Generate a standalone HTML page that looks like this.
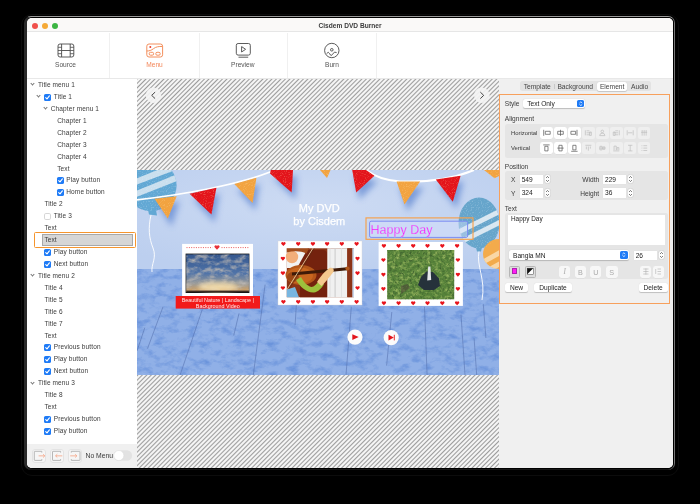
<!DOCTYPE html>
<html><head><meta charset="utf-8">
<style>
*{margin:0;padding:0;box-sizing:border-box}
html,body{width:700px;height:504px;background:#000;overflow:hidden;font-family:"Liberation Sans",sans-serif;color:#333}
.abs{position:absolute}
svg{display:block}
.t{position:absolute;white-space:nowrap}
#win{will-change:transform;position:absolute;left:27px;top:18px;width:646px;height:450px;border-radius:5px;overflow:hidden;background:#fff}
#titlebar{position:absolute;left:0;top:0;width:646px;height:14px;background:#faf9f8;border-bottom:1px solid #e6e6e6}
.tl{position:absolute;top:4.8px;width:6px;height:6px;border-radius:50%}
#title{position:absolute;left:0;top:4px;width:646px;text-align:center;font-size:6.6px;font-weight:bold;color:#3c3c3c}
#toolbar{position:absolute;left:0;top:14px;width:646px;height:47px;background:#fff;border-bottom:1px solid #e8e8e8}
.tdiv{position:absolute;top:1px;width:1px;height:45px;background:#f0f0f0}
.tlabel{position:absolute;top:29px;width:60px;text-align:center;font-size:6.6px;color:#555}
#side{position:absolute;left:0;top:61px;width:110px;height:389px;background:#fff}
.row{position:absolute;height:12px;line-height:12px;font-size:6.5px;color:#3a3a3a;white-space:nowrap;letter-spacing:0.12px}
.chev{position:absolute;width:3px;height:3px;border-right:0.8px solid #777;border-bottom:0.8px solid #777;transform:rotate(45deg)}
.cb{position:absolute;width:7px;height:7px;border-radius:1.6px;background:#1f7bf6}
.cb svg{position:absolute;left:0;top:0}
.cbo{position:absolute;width:7px;height:7px;border-radius:1.8px;background:#fff;border:0.6px solid #d6d6d6}
#sidebot{position:absolute;left:0;top:425px;width:110px;height:25px;background:#f0f0f0}
#center{position:absolute;left:110px;top:61px;width:362px;height:389px;
 background-color:#f5f5f5;
 background-image:repeating-linear-gradient(135deg,#9c9c9c 0px,#f5f5f5 1.05px,#f5f5f5 2.13px,#9c9c9c 3.18px)}
#right{position:absolute;left:472px;top:61px;width:174px;height:389px;background:#f0f0f0}
</style></head><body>
<div class="abs" style="left:21px;top:14px;width:658px;height:462px;border-radius:11px;border:1px solid #0c0c0c"></div>
<div class="abs" style="left:24px;top:16px;width:651px;height:454px;border-radius:7px;background:#161616;border-top:1px solid #9a9a9a;border-right:1px solid #777;border-left:3px solid #2a2a2a"></div>
<div class="abs" style="left:27px;top:17px;width:647px;height:452px;border-radius:6px;background:#000"></div>
<div id="win">
  <div id="titlebar">
    <div class="tl" style="left:4.6px;background:#f0504a"></div>
    <div class="tl" style="left:14.6px;background:#f5a935"></div>
    <div class="tl" style="left:24.6px;background:#3bb542"></div>
    <div id="title">Cisdem DVD Burner</div>
  </div>
  <div id="toolbar">
    <div class="tdiv" style="left:82px"></div>
    <div class="tdiv" style="left:172px"></div>
    <div class="tdiv" style="left:260px"></div>
    <div class="tdiv" style="left:349px"></div>
    <svg class="abs" style="left:0;top:0" width="646" height="46" viewBox="27 32 646 46">
      <g fill="none" stroke="#4a4a4a" stroke-width="0.9">
        <rect x="58" y="44" width="15.8" height="13" rx="2"/>
        <line x1="61.6" y1="44" x2="61.6" y2="57"/>
        <line x1="70.2" y1="44" x2="70.2" y2="57"/>
        <line x1="61.6" y1="50.5" x2="70.2" y2="50.5"/>
      </g>
      <g stroke="#4a4a4a" stroke-width="0.8">
        <line x1="58" y1="47.3" x2="61.6" y2="47.3"/><line x1="58" y1="50.5" x2="61.6" y2="50.5"/><line x1="58" y1="53.7" x2="61.6" y2="53.7"/>
        <line x1="70.2" y1="47.3" x2="73.8" y2="47.3"/><line x1="70.2" y1="50.5" x2="73.8" y2="50.5"/><line x1="70.2" y1="53.7" x2="73.8" y2="53.7"/>
      </g>
      <g fill="none" stroke="#f48f5c" stroke-width="1">
        <rect x="146.8" y="44" width="15.8" height="13" rx="2.2"/>
        <path d="M146.8 51 C149.5 51 151.2 50.4 153.6 48.6 C156 46.8 158.5 46.3 162.6 46.5"/>
        <rect x="149.2" y="52.3" width="4.4" height="2.9" rx="1.3"/>
        <rect x="155.8" y="52.3" width="4.4" height="2.9" rx="1.3"/>
      </g>
      <circle cx="150.3" cy="47.1" r="1" fill="#ea3b2c"/>
      <g fill="none" stroke="#4a4a4a" stroke-width="0.9">
        <rect x="236.3" y="43.5" width="14" height="11.6" rx="1.8"/>
        <line x1="238.5" y1="57.2" x2="248.2" y2="57.2"/>
        <path d="M241.6 46.6 L245.6 49.3 L241.6 52 Z" stroke-linejoin="round"/>
      </g>
      <g fill="none" stroke="#4a4a4a" stroke-width="0.9">
        <circle cx="331.8" cy="50.5" r="7.2"/>
        <circle cx="331.8" cy="49.8" r="1.3"/>
        <path d="M326.6 53.6 Q328.4 51 329.6 53.6 Q331 57 332.6 54.2 Q334.4 50.8 336.6 52.6"/>
      </g>
    </svg>
    <div class="tlabel" style="left:8.5px">Source</div>
    <div class="tlabel" style="left:97.5px;color:#f3875a">Menu</div>
    <div class="tlabel" style="left:185.8px">Preview</div>
    <div class="tlabel" style="left:275px">Burn</div>
  </div>
  <div id="side"></div>
<!--SIDE-->
<div class="row" style="left:11.00px;top:61.00px">Title menu 1</div>
<div class="chev" style="left:3.90px;top:64.40px"></div>
<div class="row" style="left:26.80px;top:72.93px">Title 1</div>
<div class="chev" style="left:10.10px;top:76.33px"></div>
<div class="cb" style="left:17.00px;top:75.63px"><svg width="7" height="7" viewBox="0 0 7 7"><path d="M1.7 3.6 L3 4.9 L5.4 1.9" stroke="#fff" stroke-width="1.1" fill="none" stroke-linecap="round" stroke-linejoin="round"/></svg></div>
<div class="row" style="left:23.80px;top:84.86px">Chapter menu 1</div>
<div class="chev" style="left:17.00px;top:88.26px"></div>
<div class="row" style="left:30.20px;top:96.79px">Chapter 1</div>
<div class="row" style="left:30.20px;top:108.72px">Chapter 2</div>
<div class="row" style="left:30.20px;top:120.65px">Chapter 3</div>
<div class="row" style="left:30.20px;top:132.58px">Chapter 4</div>
<div class="row" style="left:30.20px;top:144.51px">Text</div>
<div class="row" style="left:39.30px;top:156.44px">Play button</div>
<div class="cb" style="left:30.00px;top:159.14px"><svg width="7" height="7" viewBox="0 0 7 7"><path d="M1.7 3.6 L3 4.9 L5.4 1.9" stroke="#fff" stroke-width="1.1" fill="none" stroke-linecap="round" stroke-linejoin="round"/></svg></div>
<div class="row" style="left:39.30px;top:168.37px">Home button</div>
<div class="cb" style="left:30.00px;top:171.07px"><svg width="7" height="7" viewBox="0 0 7 7"><path d="M1.7 3.6 L3 4.9 L5.4 1.9" stroke="#fff" stroke-width="1.1" fill="none" stroke-linecap="round" stroke-linejoin="round"/></svg></div>
<div class="row" style="left:17.40px;top:180.30px">Title 2</div>
<div class="row" style="left:26.70px;top:192.23px">Title 3</div>
<div class="cbo" style="left:17.00px;top:194.93px"></div>
<div class="row" style="left:17.40px;top:204.16px">Text</div>
<div class="abs" style="left:6.90px;top:214.30px;width:101.90px;height:16.10px;border:1.2px solid #f5952e;border-radius:1.5px"></div>
<div class="abs" style="left:15.00px;top:215.80px;width:90.50px;height:12.00px;background:#d6d6d6;border:0.6px solid #a8a8a8"></div>
<div class="row" style="left:17.40px;top:216.09px">Text</div>
<div class="row" style="left:26.70px;top:228.02px">Play button</div>
<div class="cb" style="left:17.00px;top:230.72px"><svg width="7" height="7" viewBox="0 0 7 7"><path d="M1.7 3.6 L3 4.9 L5.4 1.9" stroke="#fff" stroke-width="1.1" fill="none" stroke-linecap="round" stroke-linejoin="round"/></svg></div>
<div class="row" style="left:26.70px;top:239.95px">Next button</div>
<div class="cb" style="left:17.00px;top:242.65px"><svg width="7" height="7" viewBox="0 0 7 7"><path d="M1.7 3.6 L3 4.9 L5.4 1.9" stroke="#fff" stroke-width="1.1" fill="none" stroke-linecap="round" stroke-linejoin="round"/></svg></div>
<div class="row" style="left:11.00px;top:251.88px">Title menu 2</div>
<div class="chev" style="left:3.90px;top:255.28px"></div>
<div class="row" style="left:17.40px;top:263.81px">Title 4</div>
<div class="row" style="left:17.40px;top:275.74px">Title 5</div>
<div class="row" style="left:17.40px;top:287.67px">Title 6</div>
<div class="row" style="left:17.40px;top:299.60px">Title 7</div>
<div class="row" style="left:17.40px;top:311.53px">Text</div>
<div class="row" style="left:26.70px;top:323.46px">Previous button</div>
<div class="cb" style="left:17.00px;top:326.16px"><svg width="7" height="7" viewBox="0 0 7 7"><path d="M1.7 3.6 L3 4.9 L5.4 1.9" stroke="#fff" stroke-width="1.1" fill="none" stroke-linecap="round" stroke-linejoin="round"/></svg></div>
<div class="row" style="left:26.70px;top:335.39px">Play button</div>
<div class="cb" style="left:17.00px;top:338.09px"><svg width="7" height="7" viewBox="0 0 7 7"><path d="M1.7 3.6 L3 4.9 L5.4 1.9" stroke="#fff" stroke-width="1.1" fill="none" stroke-linecap="round" stroke-linejoin="round"/></svg></div>
<div class="row" style="left:26.70px;top:347.32px">Next button</div>
<div class="cb" style="left:17.00px;top:350.02px"><svg width="7" height="7" viewBox="0 0 7 7"><path d="M1.7 3.6 L3 4.9 L5.4 1.9" stroke="#fff" stroke-width="1.1" fill="none" stroke-linecap="round" stroke-linejoin="round"/></svg></div>
<div class="row" style="left:11.00px;top:359.25px">Title menu 3</div>
<div class="chev" style="left:3.90px;top:362.65px"></div>
<div class="row" style="left:17.40px;top:371.18px">Title 8</div>
<div class="row" style="left:17.40px;top:383.11px">Text</div>
<div class="row" style="left:26.70px;top:395.04px">Previous button</div>
<div class="cb" style="left:17.00px;top:397.74px"><svg width="7" height="7" viewBox="0 0 7 7"><path d="M1.7 3.6 L3 4.9 L5.4 1.9" stroke="#fff" stroke-width="1.1" fill="none" stroke-linecap="round" stroke-linejoin="round"/></svg></div>
<div class="row" style="left:26.70px;top:406.97px">Play button</div>
<div class="cb" style="left:17.00px;top:409.67px"><svg width="7" height="7" viewBox="0 0 7 7"><path d="M1.7 3.6 L3 4.9 L5.4 1.9" stroke="#fff" stroke-width="1.1" fill="none" stroke-linecap="round" stroke-linejoin="round"/></svg></div>

<!--/SIDE-->
<!--SIDEBOT-->
<div class="abs" style="left:-27px;top:-18px;width:700px;height:504px">
<div class="abs" style="left:27px;top:443.5px;width:110px;height:24px;background:#f0f0f0"></div>
<div class="abs" style="left:32.3px;top:448.9px;width:14px;height:14px;background:#f6f6f6;border:0.6px solid #e3e3e3;border-radius:3px"></div>
<div class="abs" style="left:50.2px;top:448.9px;width:14px;height:14px;background:#f6f6f6;border:0.6px solid #e3e3e3;border-radius:3px"></div>
<div class="abs" style="left:67.8px;top:448.9px;width:14px;height:14px;background:#f6f6f6;border:0.6px solid #e3e3e3;border-radius:3px"></div>
<svg class="abs" style="left:0;top:0" width="700" height="504">
 <g fill="none" stroke="#ababab" stroke-width="0.85" stroke-linejoin="round">
  <path d="M41.8 451.3 H34.8 Q34.3 451.3 34.3 451.8 V459.9 Q34.3 460.4 34.8 460.4 H41.8 M41.8 451.3 V452.6 M41.8 460.4 V459.1"/>
  <path d="M60.6 451.3 H53 Q52.5 451.3 52.5 451.8 V459.9 Q52.5 460.4 53 460.4 H60.6 M60.6 451.3 V452.6 M60.6 460.4 V459.1"/>
  <path d="M71.3 451.3 H79.5 Q80 451.3 80 451.8 V459.9 Q80 460.4 79.5 460.4 H71.3 M71.3 451.3 V452.6 M71.3 460.4 V459.1"/>
 </g>
 <g fill="none" stroke="#f5a88a" stroke-width="0.85">
  <path d="M38.6 455.85 H44.8 M43.1 454.2 L44.8 455.85 L43.1 457.5"/>
  <path d="M55.6 455.85 H62.3 M57.3 454.2 L55.6 455.85 L57.3 457.5"/>
  <path d="M70.2 455.85 H76.9 M75.2 454.2 L76.9 455.85 L75.2 457.5"/>
 </g>
 <rect x="113.5" y="450.3" width="18.6" height="10.5" rx="5.25" fill="#e2e2e2"/>
 <circle cx="118.8" cy="455.55" r="5" fill="#fff" stroke="#d4d4d4" stroke-width="0.35"/>
</svg>
<div class="t" style="left:85.5px;top:453.1px;font-size:6.8px;line-height:6.8px;color:#3a3a3a">No Menu</div>
</div>
<!--/SIDEBOT-->
  <div id="center"></div>
<!--ARROWS-->
<svg class="abs" style="left:-27px;top:-18px" width="700" height="504">
 <circle cx="153.5" cy="95.3" r="7.8" fill="#f3f3f3" opacity="0.92"/>
 <circle cx="481.8" cy="95.3" r="7.8" fill="#f3f3f3" opacity="0.92"/>
 <path d="M155.1 92.1 L151.7 95.35 L155.1 98.6" stroke="#333" stroke-width="0.9" fill="none"/>
 <path d="M480.3 92.1 L483.7 95.35 L480.3 98.6" stroke="#333" stroke-width="0.9" fill="none"/>
</svg>
<!--/ARROWS-->
<!--CANVAS-->
<svg class="abs" style="left:110px;top:152px" width="362" height="205" viewBox="137 170 362 205">
  <defs>
    <radialGradient id="sky" cx="0.5" cy="0.35" r="0.7">
      <stop offset="0" stop-color="#cddbf3"/>
      <stop offset="1" stop-color="#bccfef"/>
    </radialGradient>
    <filter id="marble" x="0" y="0" width="1" height="1" color-interpolation-filters="sRGB">
      <feTurbulence type="fractalNoise" baseFrequency="0.09 0.15" numOctaves="4" seed="7" result="n"/>
      <feColorMatrix in="n" type="matrix" values="0 0 0 0 0.42  0 0 0 0 0.58  0 0 0 0 0.86  2.6 0 0 0 -1.2" result="c"/>
      <feComposite in="c" in2="SourceGraphic" operator="in"/>
    </filter>
    <filter id="fsh" x="-50%" y="-50%" width="200%" height="200%">
      <feGaussianBlur stdDeviation="3.2"/>
    </filter>
    <filter id="clouds" x="0" y="0" width="1" height="1" color-interpolation-filters="sRGB">
      <feTurbulence type="fractalNoise" baseFrequency="0.13 0.22" numOctaves="3" seed="5" result="n"/>
      <feColorMatrix in="n" type="matrix" values="0 0 0 0 0.74  0 0 0 0 0.72  0 0 0 0 0.70  2.0 0 0 0 -0.8" result="c"/>
      <feComposite in="c" in2="SourceGraphic" operator="in"/>
    </filter>
    <filter id="leaves" x="0" y="0" width="1" height="1" color-interpolation-filters="sRGB">
      <feTurbulence type="fractalNoise" baseFrequency="0.26" numOctaves="3" seed="11" result="n"/>
      <feColorMatrix in="n" type="matrix" values="0 0 0 0 0.58  0 0 0 0 0.70  0 0 0 0 0.36  2.6 0 0 0 -1.1" result="c"/>
      <feComposite in="c" in2="SourceGraphic" operator="in"/>
    </filter>
    <filter id="speck" x="0" y="0" width="1" height="1" color-interpolation-filters="sRGB">
      <feTurbulence type="fractalNoise" baseFrequency="0.9" numOctaves="1" seed="2" result="n"/>
      <feColorMatrix in="n" type="matrix" values="0 0 0 0 1  0 0 0 0 0.9  0 0 0 0 0.7  4 0 0 0 -2.1" result="c"/>
      <feComposite in="c" in2="SourceGraphic" operator="in"/>
    </filter>
    <filter id="speckb" x="0" y="0" width="1" height="1" color-interpolation-filters="sRGB">
      <feTurbulence type="fractalNoise" baseFrequency="0.8" numOctaves="1" seed="9" result="n"/>
      <feColorMatrix in="n" type="matrix" values="0 0 0 0 0.9  0 0 0 0 0.95  0 0 0 0 1  3.5 0 0 0 -1.85" result="c"/>
      <feComposite in="c" in2="SourceGraphic" operator="in"/>
    </filter>
    <filter id="blur05" x="-20%" y="-20%" width="140%" height="140%"><feGaussianBlur stdDeviation="0.6"/></filter>
    <filter id="leavesd" x="0" y="0" width="1" height="1" color-interpolation-filters="sRGB">
      <feTurbulence type="fractalNoise" baseFrequency="0.4" numOctaves="2" seed="21" result="n"/>
      <feColorMatrix in="n" type="matrix" values="0 0 0 0 0.24  0 0 0 0 0.38  0 0 0 0 0.18  3 0 0 0 -1.5" result="c"/>
      <feComposite in="c" in2="SourceGraphic" operator="in"/>
    </filter>
    <filter id="soft" x="-50%" y="-50%" width="200%" height="200%"><feGaussianBlur stdDeviation="2"/></filter>
    <linearGradient id="sunset" x1="0" y1="0" x2="0" y2="1">
      <stop offset="0" stop-color="#35578e"/>
      <stop offset="0.5" stop-color="#4f73a8"/>
      <stop offset="0.78" stop-color="#9a9a98"/>
      <stop offset="1" stop-color="#d9a25a"/>
    </linearGradient>
    <radialGradient id="forest" cx="0.5" cy="0.5" r="0.6">
      <stop offset="0" stop-color="#3a4a3a"/>
      <stop offset="0.3" stop-color="#4f7a36"/>
      <stop offset="1" stop-color="#6ea040"/>
    </radialGradient>
  </defs>
  <rect x="137" y="170" width="362" height="100" fill="url(#sky)"/>
  <!-- floor -->
  <rect x="137" y="269" width="362" height="106" fill="#90b0e7"/>
  <rect x="137" y="269" width="362" height="106" fill="#90b0e7" filter="url(#marble)"/>
  <g stroke="#4f6aa8" stroke-width="0.6" opacity="0.85">
    <line x1="163" y1="306.8" x2="147.5" y2="348.6"/>
    <line x1="144.8" y1="327.7" x2="137" y2="351"/>
    <line x1="202.3" y1="309.4" x2="180.1" y2="375"/>
    <line x1="239" y1="313.4" x2="233.7" y2="335.6"/>
    <line x1="265.1" y1="284.6" x2="253.3" y2="375"/>
    <line x1="296.4" y1="304" x2="295.1" y2="325"/>
    <line x1="351.3" y1="306.8" x2="346" y2="375"/>
    <line x1="391.8" y1="312" x2="386.6" y2="365.6"/>
    <line x1="424.5" y1="306.8" x2="427.1" y2="375"/>
    <line x1="461" y1="314.7" x2="465" y2="375"/>
    <line x1="474.1" y1="338.2" x2="476.7" y2="375"/>
    <line x1="483.3" y1="304.2" x2="485.9" y2="338"/>
  </g>
  <!-- balloons -->
  <clipPath id="bl1"><circle cx="151" cy="185.5" r="25.6"/></clipPath>
  <clipPath id="bl2"><ellipse cx="479" cy="223" rx="20.5" ry="25.5"/></clipPath>
  <clipPath id="bl3"><ellipse cx="499" cy="254" rx="16" ry="15"/></clipPath>
  <g>
    <circle cx="151" cy="185.5" r="25.6" fill="#62a8d4"/>
    <path d="M148 210 L156 210 L157 215.5 L149 214.5 Z" fill="#62a8d4"/>
    <g clip-path="url(#bl1)" fill="#dde9f3" opacity="0.85">
      <path d="M120 185 L175 163 L178 169 L120 191 Z"/>
      <path d="M120 197.5 L180 173 L182 179 L120 203.5 Z"/>
    </g>
    <path d="M151 215 C148 228 149 238 153 248 C157 258 151 264 152 272" stroke="#fff" stroke-width="0.9" fill="none"/>
  </g>
  <g>
    <ellipse cx="479" cy="223" rx="20.5" ry="25.5" fill="#66a5cb"/>
    <path d="M476 247.5 L482 247.5 L481 251.5 L477 251.5 Z" fill="#66a5cb"/>
    <g clip-path="url(#bl2)" fill="#e6eff6" opacity="0.9">
      <path d="M450 233.5 L510 203.5 L510 209 L450 239 Z"/>
      <path d="M450 244.5 L510 214.5 L510 220 L450 250 Z"/>
    </g>
    <ellipse cx="499" cy="254" rx="16" ry="15" fill="#f3ab4c"/>
    <g clip-path="url(#bl3)" fill="#fbe3bd" opacity="0.8">
      <path d="M478 262 L505 247 L506 252 L479 267 Z"/>
      <path d="M480 272 L507 257 L508 262 L481 277 Z"/>
    </g>
    <path d="M479 251.5 C476 265 486 280 482 300" stroke="#fff" stroke-width="0.9" fill="none"/>
  </g>
  <g fill="#fff" filter="url(#speckb)" opacity="0.3"><circle cx="151" cy="185.5" r="25.6"/><ellipse cx="479" cy="223" rx="20.5" ry="25.5"/></g>
  <!-- bunting shadows -->
  <g filter="url(#fsh)" fill="#6288d2" opacity="0.75" transform="translate(1.5 2.5)">
    <path d="M156 202 L178 199 L170 224 Z"/>
    <path d="M192 197 L218 191 L213 220 Z"/>
    <path d="M236 188 L258 181 L254 208 Z"/>
    <path d="M272 176 L295 173 L294 197 Z"/>
    <path d="M353 173 L376 179 L358 197 Z"/>
    <path d="M398 185 L422 185 L406 209 Z"/>
    <path d="M437 183 L462 179 L455 206 Z"/>
  </g>
  <!-- bunting string -->
  <path d="M137 199.8 C180 195 240 185 275 170" stroke="#fff" stroke-width="1.7" fill="none"/>
  <path d="M366 170 C375 177 385 180.5 400 181.5 C430 182.5 455 178 474 170" stroke="#fff" stroke-width="2.1" fill="none"/>
  <!-- flags -->
  <path d="M154.5 198.8 L176.7 196.2 L167.8 218.6 Z" fill="#f2a340"/>
  <path d="M189.6 193.8 L216.4 187.8 L211.4 214.6 Z" fill="#e3141b"/>
  <path d="M234.3 184 L256.4 177.7 L252.6 203 Z" fill="#f2a340"/>
  <path d="M270 173.4 L270.8 170 L293 170 L291.7 192.6 Z" fill="#e3141b"/>
  <path d="M320 170 L330.5 170 L327 178 Z" fill="#f2a340"/>
  <path d="M352.2 170 L366 170 L374.4 175.7 L356.2 192.6 Z" fill="#e3141b"/>
  <path d="M396.6 181.4 L420.1 181.4 L404.5 204.4 Z" fill="#f2a340"/>
  <path d="M435.8 179.6 L460.6 175.7 L452.8 201.8 Z" fill="#e3141b"/>
  <path d="M484 170 L499 170 L499 176 L494.5 178.3 Z" fill="#f2a340"/>
  <g fill="#fff" filter="url(#speck)" opacity="0.28"><path d="M154.5 198.8 L176.7 196.2 L167.8 218.6 Z"/><path d="M189.6 193.8 L216.4 187.8 L211.4 214.6 Z"/><path d="M234.3 184 L256.4 177.7 L252.6 203 Z"/><path d="M270 173.4 L270.8 170 L293 170 L291.7 192.6 Z"/><path d="M320 170 L330.5 170 L327 178 Z"/><path d="M352.2 170 L366 170 L374.4 175.7 L356.2 192.6 Z"/><path d="M396.6 181.4 L420.1 181.4 L404.5 204.4 Z"/><path d="M435.8 179.6 L460.6 175.7 L452.8 201.8 Z"/><path d="M484 170 L499 170 L499 176 L494.5 178.3 Z"/></g>
  <!-- title -->
  <text x="319.3" y="212" text-anchor="middle" font-family="Liberation Sans" font-size="11" fill="#ffffff" stroke="#ffffff" stroke-width="0.25">My DVD</text>
  <text x="319.3" y="225.3" text-anchor="middle" font-family="Liberation Sans" font-size="11" fill="#ffffff" stroke="#ffffff" stroke-width="0.25">by Cisdem</text>
  <!-- thumb 1 -->
  <rect x="182.1" y="243.9" width="70.9" height="52.1" fill="#fff"/>
  <line x1="186.5" y1="247.6" x2="212.5" y2="247.6" stroke="#e85a5a" stroke-width="1" stroke-dasharray="1 1.35"/>
  <line x1="221.5" y1="247.6" x2="249" y2="247.6" stroke="#e85a5a" stroke-width="1" stroke-dasharray="1 1.35"/>
  <path d="M217 249.8 L214.6 247.3 A1.2 1.2 0 0 1 217 245.9 A1.2 1.2 0 0 1 219.4 247.3 Z" fill="#e8323a"/>
  <rect x="185.6" y="253.6" width="63.8" height="39.4" fill="#151515"/>
  <rect x="186.3" y="254.4" width="62.6" height="37.6" fill="url(#sunset)"/>
  <rect x="186.3" y="254.4" width="62.6" height="37.6" fill="#fff" filter="url(#clouds)"/>
  <ellipse cx="218" cy="287" rx="20" ry="5" fill="#ffe6b0" opacity="0.75" filter="url(#soft)"/>
  <rect x="186.3" y="290.6" width="62.6" height="1.4" fill="#3a2a20"/>
  <rect x="175.7" y="296" width="84.3" height="12.6" fill="#f21a1a"/>
  <text x="217.8" y="301.5" text-anchor="middle" font-family="Liberation Sans" font-size="5.4" fill="#ffe8e8">Beautiful Nature | Landscape |</text>
  <text x="217.8" y="307.7" text-anchor="middle" font-family="Liberation Sans" font-size="5.4" fill="#ffe8e8">Background Video</text>
  <!-- thumb 2 -->
  <rect x="278" y="241" width="84" height="64" fill="#fff" stroke="#d8d8d8" stroke-width="0.4"/>
  <rect x="286.8" y="248.3" width="67.2" height="48.9" fill="#8a3416"/>
  <path d="M300 297.2 V254 Q300 250 304 250 H323 Q327 250 327 254 V297.2 Z" fill="#74220e"/>
  <rect x="327.3" y="248.3" width="20" height="48.9" fill="#f0f0f0"/>
  <rect x="334.5" y="248.3" width="1.2" height="48.9" fill="#cfcfcf"/>
  <rect x="329.5" y="248.3" width="1" height="48.9" fill="#dedede"/>
  <rect x="341" y="248.3" width="1" height="48.9" fill="#e2e2e2"/>
  <rect x="347.3" y="248.3" width="5" height="48.9" fill="#8c3418"/>
  <rect x="352.3" y="248.3" width="1.7" height="48.9" fill="#c9d6ea"/>
  <path d="M286.8 248.3 H308 L297 268 H286.8 Z" fill="#f2f2f2"/>
  <circle cx="292" cy="257" r="6.2" fill="#f2ae7a"/>
  <path d="M286.8 248.3 H309 L306.5 253.5 C301 251 294 250.5 286.8 252.5 Z" fill="#a14c1c"/>
  <ellipse cx="301" cy="275" rx="15.5" ry="10" fill="#b4571a"/>
  <ellipse cx="300" cy="275.5" rx="13" ry="8" fill="#c8661f"/>
  <ellipse cx="293" cy="277" rx="6" ry="5" fill="#9c4714"/>
  <path d="M292 272.5 L347 267.2 L347.5 270.3 L292 275.6 Z" fill="#3f1a08"/>
  <circle cx="347.5" cy="268.6" r="2.1" fill="#b0581c"/>
  <path d="M296 280 C300 287 307 293 314 292.5 C318 292 322 288 324 284 L319 280.5 C317 284 314 287 311.5 287 C307 286 303 281 301 277 Z" fill="#9dc03c"/>
  <path d="M317 282 C320 277 325 271 329.5 268 C333 266.5 335 270 333 272.5 C329 277.5 325 283 321.5 286 Z" fill="#f4c88e"/>
  <line x1="286.8" y1="290" x2="312.9" y2="248.3" stroke="#f0dcae" stroke-width="0.8"/>
  <line x1="288.2" y1="290.5" x2="314.2" y2="248.6" stroke="#5a2a10" stroke-width="0.6"/>
  <path d="M286.8 289.5 L295 287 L299 297.2 H286.8 Z" fill="#78b6e0"/>
  <path d="M283.40 246.00 L281.40 243.90 A1.08 1.08 0 0 1 283.40 242.65 A1.08 1.08 0 0 1 285.40 243.90 Z" fill="#e8141c"/>
  <path d="M283.40 304.00 L281.40 301.90 A1.08 1.08 0 0 1 283.40 300.65 A1.08 1.08 0 0 1 285.40 301.90 Z" fill="#e8141c"/>
  <path d="M298.20 246.00 L296.20 243.90 A1.08 1.08 0 0 1 298.20 242.65 A1.08 1.08 0 0 1 300.20 243.90 Z" fill="#e8141c"/>
  <path d="M298.20 304.00 L296.20 301.90 A1.08 1.08 0 0 1 298.20 300.65 A1.08 1.08 0 0 1 300.20 301.90 Z" fill="#e8141c"/>
  <path d="M312.90 246.00 L310.90 243.90 A1.08 1.08 0 0 1 312.90 242.65 A1.08 1.08 0 0 1 314.90 243.90 Z" fill="#e8141c"/>
  <path d="M312.90 304.00 L310.90 301.90 A1.08 1.08 0 0 1 312.90 300.65 A1.08 1.08 0 0 1 314.90 301.90 Z" fill="#e8141c"/>
  <path d="M327.10 246.00 L325.10 243.90 A1.08 1.08 0 0 1 327.10 242.65 A1.08 1.08 0 0 1 329.10 243.90 Z" fill="#e8141c"/>
  <path d="M327.10 304.00 L325.10 301.90 A1.08 1.08 0 0 1 327.10 300.65 A1.08 1.08 0 0 1 329.10 301.90 Z" fill="#e8141c"/>
  <path d="M341.80 246.00 L339.80 243.90 A1.08 1.08 0 0 1 341.80 242.65 A1.08 1.08 0 0 1 343.80 243.90 Z" fill="#e8141c"/>
  <path d="M341.80 304.00 L339.80 301.90 A1.08 1.08 0 0 1 341.80 300.65 A1.08 1.08 0 0 1 343.80 301.90 Z" fill="#e8141c"/>
  <path d="M356.60 246.00 L354.60 243.90 A1.08 1.08 0 0 1 356.60 242.65 A1.08 1.08 0 0 1 358.60 243.90 Z" fill="#e8141c"/>
  <path d="M356.60 304.00 L354.60 301.90 A1.08 1.08 0 0 1 356.60 300.65 A1.08 1.08 0 0 1 358.60 301.90 Z" fill="#e8141c"/>
  <path d="M282.90 260.70 L280.90 258.60 A1.08 1.08 0 0 1 282.90 257.35 A1.08 1.08 0 0 1 284.90 258.60 Z" fill="#e8141c"/>
  <path d="M357.50 260.70 L355.50 258.60 A1.08 1.08 0 0 1 357.50 257.35 A1.08 1.08 0 0 1 359.50 258.60 Z" fill="#e8141c"/>
  <path d="M282.90 275.30 L280.90 273.20 A1.08 1.08 0 0 1 282.90 271.95 A1.08 1.08 0 0 1 284.90 273.20 Z" fill="#e8141c"/>
  <path d="M357.50 275.30 L355.50 273.20 A1.08 1.08 0 0 1 357.50 271.95 A1.08 1.08 0 0 1 359.50 273.20 Z" fill="#e8141c"/>
  <path d="M282.90 290.10 L280.90 288.00 A1.08 1.08 0 0 1 282.90 286.75 A1.08 1.08 0 0 1 284.90 288.00 Z" fill="#e8141c"/>
  <path d="M357.50 290.10 L355.50 288.00 A1.08 1.08 0 0 1 357.50 286.75 A1.08 1.08 0 0 1 359.50 288.00 Z" fill="#e8141c"/>
  <!-- thumb 3 -->
  <rect x="378.6" y="242" width="84.3" height="63.9" fill="#fff"/>
  <rect x="387.2" y="250" width="67" height="49.3" fill="#56823a"/>
  <rect x="387.2" y="250" width="67" height="49.3" fill="#fff" filter="url(#leaves)"/>
  <rect x="387.2" y="250" width="67" height="49.3" fill="#fff" filter="url(#leavesd)"/>
  <path d="M418 285 L421 277 L426.5 271.5 L433 272 L439 278.5 L440 286 L434 290 L424 290 Z" fill="#26323a" filter="url(#blur05)"/>
  <path d="M428.2 266.5 L430.4 266.5 L431.2 280 L427.2 280.5 Z" fill="#e4e8ea"/>
  <path d="M401 286 L407 284 L410 288 L404 292 L401 294 Z" fill="#4a4436" opacity="0.55"/>
  <path d="M383.90 248.00 L381.90 245.90 A1.08 1.08 0 0 1 383.90 244.65 A1.08 1.08 0 0 1 385.90 245.90 Z" fill="#e8141c"/>
  <path d="M383.90 305.30 L381.90 303.20 A1.08 1.08 0 0 1 383.90 301.95 A1.08 1.08 0 0 1 385.90 303.20 Z" fill="#e8141c"/>
  <path d="M398.60 248.00 L396.60 245.90 A1.08 1.08 0 0 1 398.60 244.65 A1.08 1.08 0 0 1 400.60 245.90 Z" fill="#e8141c"/>
  <path d="M398.60 305.30 L396.60 303.20 A1.08 1.08 0 0 1 398.60 301.95 A1.08 1.08 0 0 1 400.60 303.20 Z" fill="#e8141c"/>
  <path d="M413.20 248.00 L411.20 245.90 A1.08 1.08 0 0 1 413.20 244.65 A1.08 1.08 0 0 1 415.20 245.90 Z" fill="#e8141c"/>
  <path d="M413.20 305.30 L411.20 303.20 A1.08 1.08 0 0 1 413.20 301.95 A1.08 1.08 0 0 1 415.20 303.20 Z" fill="#e8141c"/>
  <path d="M427.50 248.00 L425.50 245.90 A1.08 1.08 0 0 1 427.50 244.65 A1.08 1.08 0 0 1 429.50 245.90 Z" fill="#e8141c"/>
  <path d="M427.50 305.30 L425.50 303.20 A1.08 1.08 0 0 1 427.50 301.95 A1.08 1.08 0 0 1 429.50 303.20 Z" fill="#e8141c"/>
  <path d="M442.30 248.00 L440.30 245.90 A1.08 1.08 0 0 1 442.30 244.65 A1.08 1.08 0 0 1 444.30 245.90 Z" fill="#e8141c"/>
  <path d="M442.30 305.30 L440.30 303.20 A1.08 1.08 0 0 1 442.30 301.95 A1.08 1.08 0 0 1 444.30 303.20 Z" fill="#e8141c"/>
  <path d="M457.10 248.00 L455.10 245.90 A1.08 1.08 0 0 1 457.10 244.65 A1.08 1.08 0 0 1 459.10 245.90 Z" fill="#e8141c"/>
  <path d="M457.10 305.30 L455.10 303.20 A1.08 1.08 0 0 1 457.10 301.95 A1.08 1.08 0 0 1 459.10 303.20 Z" fill="#e8141c"/>
  <path d="M383.40 262.10 L381.40 260.00 A1.08 1.08 0 0 1 383.40 258.75 A1.08 1.08 0 0 1 385.40 260.00 Z" fill="#e8141c"/>
  <path d="M457.90 262.10 L455.90 260.00 A1.08 1.08 0 0 1 457.90 258.75 A1.08 1.08 0 0 1 459.90 260.00 Z" fill="#e8141c"/>
  <path d="M383.40 276.70 L381.40 274.60 A1.08 1.08 0 0 1 383.40 273.35 A1.08 1.08 0 0 1 385.40 274.60 Z" fill="#e8141c"/>
  <path d="M457.90 276.70 L455.90 274.60 A1.08 1.08 0 0 1 457.90 273.35 A1.08 1.08 0 0 1 459.90 274.60 Z" fill="#e8141c"/>
  <path d="M383.40 291.00 L381.40 288.90 A1.08 1.08 0 0 1 383.40 287.65 A1.08 1.08 0 0 1 385.40 288.90 Z" fill="#e8141c"/>
  <path d="M457.90 291.00 L455.90 288.90 A1.08 1.08 0 0 1 457.90 287.65 A1.08 1.08 0 0 1 459.90 288.90 Z" fill="#e8141c"/>
  <!-- play buttons -->
  <circle cx="355" cy="337.1" r="7.6" fill="#fbfbfb"/>
  <path d="M352.3 334.2 L358.7 337.1 L352.3 340 Z" fill="#e3141b"/>
  <circle cx="391.2" cy="337.6" r="7.6" fill="#fbfbfb"/>
  <path d="M388.5 334.8 L393.8 337.6 L388.5 340.4 Z" fill="#e3141b"/>
  <rect x="393.8" y="334.8" width="0.9" height="5.6" fill="#e3141b"/>
  <!-- happy day -->
  <rect x="369.6" y="221.2" width="98" height="16.2" rx="1.5" fill="rgba(214,224,252,0.45)" stroke="#7b8cf2" stroke-width="1"/>
  <text x="370.6" y="234" font-family="Liberation Sans" font-size="12.5" fill="#ff10ff" stroke="#c9d5f5" stroke-width="0.3">Happy Day</text>
  <rect x="366" y="217.9" width="107" height="21.4" fill="none" stroke="#f7a04a" stroke-width="1.15"/>
</svg>
<!--/CANVAS-->
  <div id="right"></div>
<!--RIGHT-->
<div class="abs" style="left:-27px;top:-18px;width:700px;height:504px">
<div class="abs" style="left:520.20px;top:81.20px;width:130.40px;height:10.30px;background:#e3e3e3;border-radius:2.5px"></div>
<div class="abs" style="left:596.80px;top:81.80px;width:30.00px;height:9.10px;background:#fff;border-radius:2px;box-shadow:0 0.3px 0.8px rgba(0,0,0,.18)"></div>
<div class="abs" style="left:554.30px;top:83.50px;width:0.60px;height:5.70px;background:#c9c9c9"></div>
<div class="t" style="left:523.70px;top:84.03px;font-size:6.7px;line-height:6.7px;color:#444;">Template</div>
<div class="t" style="left:557.40px;top:84.03px;font-size:6.7px;line-height:6.7px;color:#444;">Background</div>
<div class="t" style="left:599.90px;top:84.03px;font-size:6.7px;line-height:6.7px;color:#444;">Element</div>
<div class="t" style="left:631.00px;top:84.03px;font-size:6.7px;line-height:6.7px;color:#444;">Audio</div>
<div class="abs" style="left:499.00px;top:94.30px;width:171.40px;height:209.50px;border:1.3px solid #f7a05c"></div>
<div class="t" style="left:504.80px;top:101.11px;font-size:6.6px;line-height:6.6px;color:#3a3a3a;">Style</div>
<div class="abs" style="left:522.80px;top:99.10px;width:62.30px;height:8.80px;background:#fff;border-radius:2px;box-shadow:0 0.4px 1px rgba(0,0,0,.22)"></div>
<div class="t" style="left:527.30px;top:101.11px;font-size:6.6px;line-height:6.6px;color:#222;">Text Only</div>
<div class="abs" style="left:576.8px;top:99.8px;width:7.7px;height:7.4px;background:#1f7bf6;border-radius:1.6px"><svg width="7.7" height="7.4" viewBox="0 0 7.7 7.4"><path d="M2.5 3 L3.85 1.8 L5.2 3 M2.5 4.4 L3.85 5.6 L5.2 4.4" stroke="#fff" stroke-width="0.8" fill="none"/></svg></div>
<div class="t" style="left:504.80px;top:115.51px;font-size:6.6px;line-height:6.6px;color:#3a3a3a;">Alignment</div>
<div class="abs" style="left:505.25px;top:124.20px;width:162.50px;height:33.55px;background:#e5e5e5;border-radius:2.5px"></div>
<div class="t" style="left:510.90px;top:131.21px;font-size:5.9px;line-height:5.9px;color:#3a3a3a;">Horizontal</div>
<div class="t" style="left:510.90px;top:146.31px;font-size:5.9px;line-height:5.9px;color:#3a3a3a;">Vertical</div>
<div class="abs" style="left:540.20px;top:126.60px;width:12.60px;height:12.40px;background:#fff;border-radius:2.2px;box-shadow:0 0.3px 0.6px rgba(0,0,0,.12)"></div>
<div class="abs" style="left:554.15px;top:126.60px;width:12.60px;height:12.40px;background:#fff;border-radius:2.2px;box-shadow:0 0.3px 0.6px rgba(0,0,0,.12)"></div>
<div class="abs" style="left:568.10px;top:126.60px;width:12.60px;height:12.40px;background:#fff;border-radius:2.2px;box-shadow:0 0.3px 0.6px rgba(0,0,0,.12)"></div>
<div class="abs" style="left:582.05px;top:126.60px;width:12.60px;height:12.40px;background:#efefef;border-radius:2.2px"></div>
<div class="abs" style="left:596.00px;top:126.60px;width:12.60px;height:12.40px;background:#efefef;border-radius:2.2px"></div>
<div class="abs" style="left:609.95px;top:126.60px;width:12.60px;height:12.40px;background:#efefef;border-radius:2.2px"></div>
<div class="abs" style="left:623.90px;top:126.60px;width:12.60px;height:12.40px;background:#efefef;border-radius:2.2px"></div>
<div class="abs" style="left:637.85px;top:126.60px;width:12.60px;height:12.40px;background:#efefef;border-radius:2.2px"></div>
<div class="abs" style="left:540.20px;top:141.80px;width:12.60px;height:12.60px;background:#fff;border-radius:2.2px;box-shadow:0 0.3px 0.6px rgba(0,0,0,.12)"></div>
<div class="abs" style="left:554.15px;top:141.80px;width:12.60px;height:12.60px;background:#fff;border-radius:2.2px;box-shadow:0 0.3px 0.6px rgba(0,0,0,.12)"></div>
<div class="abs" style="left:568.10px;top:141.80px;width:12.60px;height:12.60px;background:#fff;border-radius:2.2px;box-shadow:0 0.3px 0.6px rgba(0,0,0,.12)"></div>
<div class="abs" style="left:582.05px;top:141.80px;width:12.60px;height:12.60px;background:#efefef;border-radius:2.2px"></div>
<div class="abs" style="left:596.00px;top:141.80px;width:12.60px;height:12.60px;background:#efefef;border-radius:2.2px"></div>
<div class="abs" style="left:609.95px;top:141.80px;width:12.60px;height:12.60px;background:#efefef;border-radius:2.2px"></div>
<div class="abs" style="left:623.90px;top:141.80px;width:12.60px;height:12.60px;background:#efefef;border-radius:2.2px"></div>
<div class="abs" style="left:637.85px;top:141.80px;width:12.60px;height:12.60px;background:#efefef;border-radius:2.2px"></div>
<svg class="abs" style="left:0;top:0" width="700" height="504"><path d="M543.7 129.8 V135.8 M545.3 131.3 H550.2 V134.3 H545.3 Z" stroke="#555" stroke-width="0.7" fill="none"/><path d="M560.5 129.8 V135.8 M557.7 131.3 H563.3 V134.3 H557.7 Z" stroke="#555" stroke-width="0.7" fill="none"/><path d="M577.0 129.8 V135.8 M570.9 131.3 H575.6 V134.3 H570.9 Z" stroke="#555" stroke-width="0.7" fill="none"/><path d="M543.2 144.9 H549.6 M544.8 146.29999999999998 H548 V150.9 H544.8 Z" stroke="#555" stroke-width="0.7" fill="none"/><path d="M557.3 148.1 H563.7 M558.9 145.29999999999998 H562.1 V150.9 H558.9 Z" stroke="#555" stroke-width="0.7" fill="none"/><path d="M571.2 151.29999999999998 H577.6 M572.8 145.29999999999998 H576 V149.9 H572.8 Z" stroke="#555" stroke-width="0.7" fill="none"/><path d="M585.35 130.3 V135.3 M586.5500000000001 130.8 H589.35 M586.5500000000001 132.8 H590.85 M586.5500000000001 134.8 H589.85 M589.5500000000001 132.0 H591.35 V135.4 H589.5500000000001 Z" stroke="#bdbdbd" stroke-width="0.7" fill="none"/><path d="M602.3 131.4 m-1.3 0 a1.3 1.3 0 1 0 2.6 0 a1.3 1.3 0 1 0 -2.6 0 M599.6999999999999 135.60000000000002 Q599.6999999999999 133.20000000000002 602.3 133.20000000000002 Q604.9 133.20000000000002 604.9 135.60000000000002 Z" stroke="#bdbdbd" stroke-width="0.7" fill="none"/><path d="M619.25 130.3 V135.3 M618.05 130.8 H615.25 M618.05 132.8 H613.75 M618.05 134.8 H614.75 M615.05 132.0 H613.25 V135.4 H615.05 Z" stroke="#bdbdbd" stroke-width="0.7" fill="none"/><path d="M627.2 130.3 V135.3 M633.2 130.3 V135.3 M628.0 132.8 H632.4000000000001" stroke="#bdbdbd" stroke-width="0.7" fill="none"/><path d="M642.15 130.0 V135.60000000000002 M644.15 130.0 V135.60000000000002 M646.15 130.0 V135.60000000000002 M641.15 132.3 H647.15" stroke="#bdbdbd" stroke-width="0.7" fill="none"/><path d="M585.35 145.29999999999998 H591.35 M586.35 146.5 V149.29999999999998 M588.35 146.5 V150.7 M590.35 146.5 V148.6" stroke="#bdbdbd" stroke-width="0.7" fill="none"/><path d="M599.3 148.1 H605.3 M599.9 146.29999999999998 H602.0999999999999 V149.9 H599.9 Z M602.9 146.9 H604.9 V149.29999999999998 H602.9 Z" stroke="#bdbdbd" stroke-width="0.7" fill="none"/><path d="M613.25 150.9 H619.25 M614.05 150.1 V146.1 H616.25 V150.1 M617.05 150.1 V147.6 H618.85 V150.1" stroke="#bdbdbd" stroke-width="0.7" fill="none"/><path d="M628.0 145.29999999999998 H632.4000000000001 M628.0 150.9 H632.4000000000001 M630.2 145.29999999999998 V150.9" stroke="#bdbdbd" stroke-width="0.7" fill="none"/><path d="M643.35 145.7 H647.15 M643.35 148.1 H647.15 M643.35 150.5 H647.15 M641.55 145.7 h0.8 M641.55 148.1 h0.8 M641.55 150.5 h0.8" stroke="#bdbdbd" stroke-width="0.7" fill="none"/></svg>
<div class="t" style="left:504.80px;top:163.61px;font-size:6.6px;line-height:6.6px;color:#3a3a3a;">Position</div>
<div class="abs" style="left:505.25px;top:171.30px;width:162.50px;height:29.20px;background:#e5e5e5;border-radius:2.5px"></div>
<div class="t" style="left:510.90px;top:177.01px;font-size:6.6px;line-height:6.6px;color:#3a3a3a;">X</div>
<div class="t" style="left:510.90px;top:190.91px;font-size:6.6px;line-height:6.6px;color:#3a3a3a;">Y</div>
<div class="abs" style="left:519.50px;top:174.50px;width:23.80px;height:9.30px;background:#fff;box-shadow:0 0.3px 0.6px rgba(0,0,0,.15)"></div>
<div class="t" style="left:521.70px;top:176.51px;font-size:6.6px;line-height:6.6px;color:#222;">549</div>
<div class="abs" style="left:543.90px;top:174.15px;width:7px;height:10px"><svg width="7" height="10" viewBox="0 0 7 10"><rect x="0.3" y="0.3" width="6.4" height="9.4" rx="3.2" fill="#fdfdfd" stroke="#b9b9b9" stroke-width="0.5"/><path d="M2.1 3.9 L3.5 2.5 L4.9 3.9 M2.1 6.1 L3.5 7.5 L4.9 6.1" stroke="#3a3a3a" stroke-width="0.7" fill="none"/></svg></div>
<div class="abs" style="left:519.50px;top:188.30px;width:23.80px;height:9.30px;background:#fff;box-shadow:0 0.3px 0.6px rgba(0,0,0,.15)"></div>
<div class="t" style="left:521.70px;top:190.31px;font-size:6.6px;line-height:6.6px;color:#222;">324</div>
<div class="abs" style="left:543.90px;top:187.95px;width:7px;height:10px"><svg width="7" height="10" viewBox="0 0 7 10"><rect x="0.3" y="0.3" width="6.4" height="9.4" rx="3.2" fill="#fdfdfd" stroke="#b9b9b9" stroke-width="0.5"/><path d="M2.1 3.9 L3.5 2.5 L4.9 3.9 M2.1 6.1 L3.5 7.5 L4.9 6.1" stroke="#3a3a3a" stroke-width="0.7" fill="none"/></svg></div>
<div class="t" style="left:539.20px;top:177.01px;width:60px;text-align:right;font-size:6.6px;line-height:6.6px;color:#3a3a3a;">Width</div>
<div class="t" style="left:539.20px;top:190.91px;width:60px;text-align:right;font-size:6.6px;line-height:6.6px;color:#3a3a3a;">Height</div>
<div class="abs" style="left:602.80px;top:174.50px;width:23.70px;height:9.30px;background:#fff;box-shadow:0 0.3px 0.6px rgba(0,0,0,.15)"></div>
<div class="t" style="left:605.00px;top:176.51px;font-size:6.6px;line-height:6.6px;color:#222;">229</div>
<div class="abs" style="left:627.10px;top:174.15px;width:7px;height:10px"><svg width="7" height="10" viewBox="0 0 7 10"><rect x="0.3" y="0.3" width="6.4" height="9.4" rx="3.2" fill="#fdfdfd" stroke="#b9b9b9" stroke-width="0.5"/><path d="M2.1 3.9 L3.5 2.5 L4.9 3.9 M2.1 6.1 L3.5 7.5 L4.9 6.1" stroke="#3a3a3a" stroke-width="0.7" fill="none"/></svg></div>
<div class="abs" style="left:602.80px;top:188.30px;width:23.70px;height:9.30px;background:#fff;box-shadow:0 0.3px 0.6px rgba(0,0,0,.15)"></div>
<div class="t" style="left:605.00px;top:190.31px;font-size:6.6px;line-height:6.6px;color:#222;">36</div>
<div class="abs" style="left:627.10px;top:187.95px;width:7px;height:10px"><svg width="7" height="10" viewBox="0 0 7 10"><rect x="0.3" y="0.3" width="6.4" height="9.4" rx="3.2" fill="#fdfdfd" stroke="#b9b9b9" stroke-width="0.5"/><path d="M2.1 3.9 L3.5 2.5 L4.9 3.9 M2.1 6.1 L3.5 7.5 L4.9 6.1" stroke="#3a3a3a" stroke-width="0.7" fill="none"/></svg></div>
<div class="t" style="left:504.80px;top:205.71px;font-size:6.6px;line-height:6.6px;color:#3a3a3a;">Text</div>
<div class="abs" style="left:505.25px;top:212.50px;width:162.50px;height:66.00px;background:#e5e5e5;border-radius:2.5px"></div>
<div class="abs" style="left:508.40px;top:214.60px;width:156.20px;height:30.50px;background:#fff"></div>
<div class="t" style="left:511.00px;top:216.08px;font-size:6.4px;line-height:6.4px;color:#222;">Happy Day</div>
<div class="abs" style="left:509.00px;top:250.00px;width:119.50px;height:10.00px;background:#fff;border-radius:2px;box-shadow:0 0.4px 1px rgba(0,0,0,.2)"></div>
<div class="t" style="left:513.00px;top:252.51px;font-size:6.6px;line-height:6.6px;color:#222;">Bangla MN</div>
<div class="abs" style="left:620.3px;top:251.3px;width:7.5px;height:7.4px;background:#1f7bf6;border-radius:1.6px"><svg width="7.7" height="7.4" viewBox="0 0 7.7 7.4"><path d="M2.5 3 L3.85 1.8 L5.2 3 M2.5 4.4 L3.85 5.6 L5.2 4.4" stroke="#fff" stroke-width="0.8" fill="none"/></svg></div>
<div class="abs" style="left:633.50px;top:250.50px;width:23.50px;height:9.50px;background:#fff;box-shadow:0 0.3px 0.6px rgba(0,0,0,.15)"></div>
<div class="t" style="left:635.70px;top:252.71px;font-size:6.6px;line-height:6.6px;color:#222;">26</div>
<div class="abs" style="left:657.90px;top:250.25px;width:7px;height:10px"><svg width="7" height="10" viewBox="0 0 7 10"><rect x="0.3" y="0.3" width="6.4" height="9.4" rx="3.2" fill="#fdfdfd" stroke="#b9b9b9" stroke-width="0.5"/><path d="M2.1 3.9 L3.5 2.5 L4.9 3.9 M2.1 6.1 L3.5 7.5 L4.9 6.1" stroke="#3a3a3a" stroke-width="0.7" fill="none"/></svg></div>
<div class="abs" style="left:508.70px;top:265.50px;width:11.60px;height:12.00px;background:#dcdcdc;border:0.6px solid #b5b5b5;border-radius:1.5px"></div>
<div class="abs" style="left:511.80px;top:268.20px;width:5.40px;height:6.20px;background:#ff1cf5;border:0.5px solid #b020b0"></div>
<div class="abs" style="left:524.80px;top:265.50px;width:11.40px;height:12.00px;background:#dcdcdc;border:0.6px solid #b5b5b5;border-radius:1.5px"></div>
<svg class="abs" style="left:527.3px;top:268.3px" width="6.4" height="6.4" viewBox="0 0 6.4 6.4"><rect x="0.2" y="0.2" width="6" height="6" fill="#fff" stroke="#222" stroke-width="0.4"/><path d="M0.2 6.2 L6.2 0.2 L0.2 0.2 Z" fill="#111"/></svg>
<div class="abs" style="left:559.00px;top:265.50px;width:11.30px;height:12.00px;background:#f7f7f7;border-radius:2.2px;box-shadow:0 0.3px 0.6px rgba(0,0,0,.1)"></div>
<div class="t" style="left:558.65px;top:269.11px;width:12px;text-align:center;font-size:7.2px;line-height:7.2px;color:#a9a9a9;font-style:italic;font-family:Liberation Serif">I</div>
<div class="abs" style="left:574.80px;top:265.50px;width:11.00px;height:12.00px;background:#f7f7f7;border-radius:2.2px;box-shadow:0 0.3px 0.6px rgba(0,0,0,.1)"></div>
<div class="t" style="left:574.30px;top:269.11px;width:12px;text-align:center;font-size:7.2px;line-height:7.2px;color:#a9a9a9;font-family:Liberation Sans">B</div>
<div class="abs" style="left:590.30px;top:265.50px;width:11.20px;height:12.00px;background:#f7f7f7;border-radius:2.2px;box-shadow:0 0.3px 0.6px rgba(0,0,0,.1)"></div>
<div class="t" style="left:589.90px;top:269.11px;width:12px;text-align:center;font-size:7.2px;line-height:7.2px;color:#a9a9a9;font-family:Liberation Sans">U</div>
<div class="abs" style="left:606.00px;top:265.50px;width:11.50px;height:12.00px;background:#f7f7f7;border-radius:2.2px;box-shadow:0 0.3px 0.6px rgba(0,0,0,.1)"></div>
<div class="t" style="left:605.75px;top:269.11px;width:12px;text-align:center;font-size:7.2px;line-height:7.2px;color:#a9a9a9;font-family:Liberation Sans">S</div>
<div class="abs" style="left:640.30px;top:265.50px;width:11.20px;height:12.00px;background:#f7f7f7;border-radius:2.2px;box-shadow:0 0.3px 0.6px rgba(0,0,0,.1)"></div>
<div class="abs" style="left:652.80px;top:265.50px;width:11.20px;height:12.00px;background:#f7f7f7;border-radius:2.2px;box-shadow:0 0.3px 0.6px rgba(0,0,0,.1)"></div>
<svg class="abs" style="left:0;top:0" width="700" height="504"><g stroke="#b0b0b0" stroke-width="0.6" fill="none"><path d="M643.3 269 H648.5 M643.3 271.5 H648.5 M643.3 274 H648.5 M645.9 268.5 V274.5"/><path d="M655.7 269 V274 M657.5 269 H661 M657.5 271.5 H661 M657.5 274 H661"/></g></svg>
<div class="abs" style="left:505.25px;top:282.70px;width:22.50px;height:9.30px;background:#fff;border-radius:2px;box-shadow:0 0.3px 0.8px rgba(0,0,0,.2)"></div>
<div class="t" style="left:486.50px;top:285.11px;width:60px;text-align:center;font-size:6.6px;line-height:6.6px;color:#222;">New</div>
<div class="abs" style="left:534.00px;top:282.70px;width:38.00px;height:9.30px;background:#fff;border-radius:2px;box-shadow:0 0.3px 0.8px rgba(0,0,0,.2)"></div>
<div class="t" style="left:523.00px;top:285.11px;width:60px;text-align:center;font-size:6.6px;line-height:6.6px;color:#222;">Duplicate</div>
<div class="abs" style="left:638.50px;top:282.70px;width:29.25px;height:9.30px;background:#fff;border-radius:2px;box-shadow:0 0.3px 0.8px rgba(0,0,0,.2)"></div>
<div class="t" style="left:623.12px;top:285.11px;width:60px;text-align:center;font-size:6.6px;line-height:6.6px;color:#222;">Delete</div>

</div>
<!--/RIGHT-->
</div>
</body></html>
